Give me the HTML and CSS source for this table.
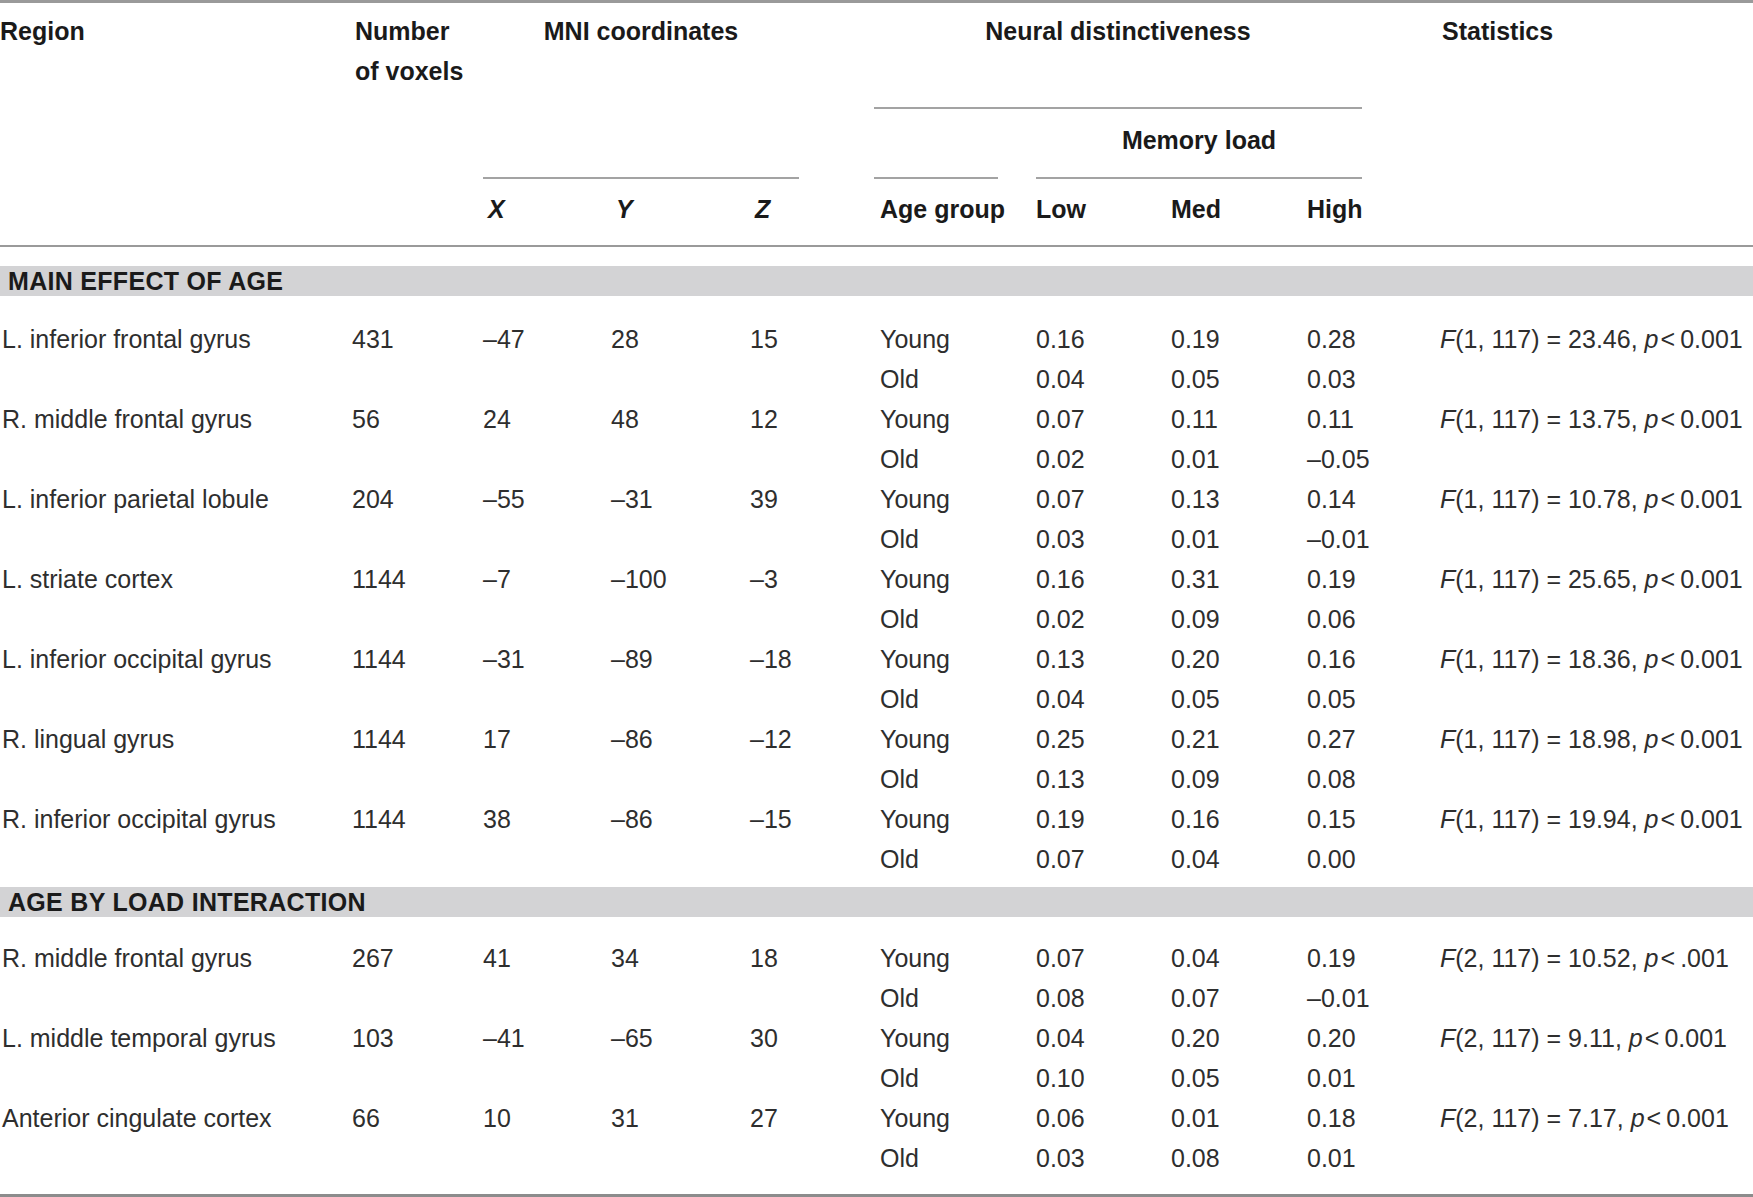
FILE: index.html
```html
<!DOCTYPE html>
<html lang="en">
<head>
<meta charset="utf-8">
<title>Neural distinctiveness table</title>
<link rel="stylesheet" href="styles.css">
</head>
<body>
<table class="tbl">
  <colgroup>
    <col class="c-region"><col class="c-num"><col class="c-x"><col class="c-y"><col class="c-z"><col class="c-gap1">
    <col class="c-age"><col class="c-gap2"><col class="c-low"><col class="c-med"><col class="c-high"><col class="c-gap3"><col class="c-stats">
  </colgroup>
  <thead>
    <tr class="h1">
      <th rowspan="3" class="th-top">Region</th>
      <th rowspan="3" class="th-top th-num">Number<br>of voxels</th>
      <th rowspan="2" colspan="3" class="th-top th-center rule">MNI coordinates</th>
      <th rowspan="3"></th>
      <th colspan="5" class="th-top th-center rule">Neural distinctiveness</th>
      <th rowspan="3"></th>
      <th rowspan="3" class="th-top th-stats">Statistics</th>
    </tr>
    <tr class="h2">
      <th class="rule"></th>
      <th></th>
      <th colspan="3" class="th-mid th-center rule">Memory load</th>
    </tr>
    <tr class="h3">
      <th class="th-sub th-axis">X</th>
      <th class="th-sub th-axis">Y</th>
      <th class="th-sub th-axis">Z</th>
      <th class="th-sub th-age">Age group</th>
      <th></th>
      <th class="th-sub">Low</th>
      <th class="th-sub">Med</th>
      <th class="th-sub">High</th>
    </tr>
  </thead>
  <tbody>
    <tr class="gap-rule"><td colspan="13"></td></tr>
    <tr class="band"><td colspan="13">MAIN EFFECT OF AGE</td></tr>
    <tr class="gap-a"><td colspan="13"></td></tr>

    <tr class="row"><td class="reg">L. inferior frontal gyrus</td><td>431</td><td>–47</td><td>28</td><td colspan="2">15</td><td colspan="2" class="age">Young</td><td>0.16</td><td>0.19</td><td colspan="2">0.28</td><td class="st"><i>F</i>(1, 117) = 23.46, <i>p</i>&#8202;&lt;&#8201;0.001</td></tr>
    <tr class="row"><td colspan="6"></td><td colspan="2" class="age">Old</td><td>0.04</td><td>0.05</td><td colspan="2">0.03</td><td></td></tr>

    <tr class="row"><td class="reg">R. middle frontal gyrus</td><td>56</td><td>24</td><td>48</td><td colspan="2">12</td><td colspan="2" class="age">Young</td><td>0.07</td><td>0.11</td><td colspan="2">0.11</td><td class="st"><i>F</i>(1, 117) = 13.75, <i>p</i>&#8202;&lt;&#8201;0.001</td></tr>
    <tr class="row"><td colspan="6"></td><td colspan="2" class="age">Old</td><td>0.02</td><td>0.01</td><td colspan="2">–0.05</td><td></td></tr>

    <tr class="row"><td class="reg">L. inferior parietal lobule</td><td>204</td><td>–55</td><td>–31</td><td colspan="2">39</td><td colspan="2" class="age">Young</td><td>0.07</td><td>0.13</td><td colspan="2">0.14</td><td class="st"><i>F</i>(1, 117) = 10.78, <i>p</i>&#8202;&lt;&#8201;0.001</td></tr>
    <tr class="row"><td colspan="6"></td><td colspan="2" class="age">Old</td><td>0.03</td><td>0.01</td><td colspan="2">–0.01</td><td></td></tr>

    <tr class="row"><td class="reg">L. striate cortex</td><td>1144</td><td>–7</td><td>–100</td><td colspan="2">–3</td><td colspan="2" class="age">Young</td><td>0.16</td><td>0.31</td><td colspan="2">0.19</td><td class="st"><i>F</i>(1, 117) = 25.65, <i>p</i>&#8202;&lt;&#8201;0.001</td></tr>
    <tr class="row"><td colspan="6"></td><td colspan="2" class="age">Old</td><td>0.02</td><td>0.09</td><td colspan="2">0.06</td><td></td></tr>

    <tr class="row"><td class="reg">L. inferior occipital gyrus</td><td>1144</td><td>–31</td><td>–89</td><td colspan="2">–18</td><td colspan="2" class="age">Young</td><td>0.13</td><td>0.20</td><td colspan="2">0.16</td><td class="st"><i>F</i>(1, 117) = 18.36, <i>p</i>&#8202;&lt;&#8201;0.001</td></tr>
    <tr class="row"><td colspan="6"></td><td colspan="2" class="age">Old</td><td>0.04</td><td>0.05</td><td colspan="2">0.05</td><td></td></tr>

    <tr class="row"><td class="reg">R. lingual gyrus</td><td>1144</td><td>17</td><td>–86</td><td colspan="2">–12</td><td colspan="2" class="age">Young</td><td>0.25</td><td>0.21</td><td colspan="2">0.27</td><td class="st"><i>F</i>(1, 117) = 18.98, <i>p</i>&#8202;&lt;&#8201;0.001</td></tr>
    <tr class="row"><td colspan="6"></td><td colspan="2" class="age">Old</td><td>0.13</td><td>0.09</td><td colspan="2">0.08</td><td></td></tr>

    <tr class="row"><td class="reg">R. inferior occipital gyrus</td><td>1144</td><td>38</td><td>–86</td><td colspan="2">–15</td><td colspan="2" class="age">Young</td><td>0.19</td><td>0.16</td><td colspan="2">0.15</td><td class="st"><i>F</i>(1, 117) = 19.94, <i>p</i>&#8202;&lt;&#8201;0.001</td></tr>
    <tr class="row"><td colspan="6"></td><td colspan="2" class="age">Old</td><td>0.07</td><td>0.04</td><td colspan="2">0.00</td><td></td></tr>

    <tr class="gap-b"><td colspan="13"></td></tr>
    <tr class="band"><td colspan="13">AGE BY LOAD INTERACTION</td></tr>
    <tr class="gap-c"><td colspan="13"></td></tr>

    <tr class="row"><td class="reg">R. middle frontal gyrus</td><td>267</td><td>41</td><td>34</td><td colspan="2">18</td><td colspan="2" class="age">Young</td><td>0.07</td><td>0.04</td><td colspan="2">0.19</td><td class="st"><i>F</i>(2, 117) = 10.52, <i>p</i>&#8202;&lt;&#8201;.001</td></tr>
    <tr class="row"><td colspan="6"></td><td colspan="2" class="age">Old</td><td>0.08</td><td>0.07</td><td colspan="2">–0.01</td><td></td></tr>

    <tr class="row"><td class="reg">L. middle temporal gyrus</td><td>103</td><td>–41</td><td>–65</td><td colspan="2">30</td><td colspan="2" class="age">Young</td><td>0.04</td><td>0.20</td><td colspan="2">0.20</td><td class="st"><i>F</i>(2, 117) = 9.11, <i>p</i>&#8202;&lt;&#8201;0.001</td></tr>
    <tr class="row"><td colspan="6"></td><td colspan="2" class="age">Old</td><td>0.10</td><td>0.05</td><td colspan="2">0.01</td><td></td></tr>

    <tr class="row"><td class="reg">Anterior cingulate cortex</td><td>66</td><td>10</td><td>31</td><td colspan="2">27</td><td colspan="2" class="age">Young</td><td>0.06</td><td>0.01</td><td colspan="2">0.18</td><td class="st"><i>F</i>(2, 117) = 7.17, <i>p</i>&#8202;&lt;&#8201;0.001</td></tr>
    <tr class="row"><td colspan="6"></td><td colspan="2" class="age">Old</td><td>0.03</td><td>0.08</td><td colspan="2">0.01</td><td></td></tr>

    <tr class="gap-d"><td colspan="13"></td></tr>
  </tbody>
</table>
</body>
</html>
```

FILE: styles.css
```css
html, body {
  margin: 0;
  padding: 0;
  background: #ffffff;
}

body {
  font-family: "Liberation Sans", Arial, sans-serif;
  color: #2e2e2e;
  width: 1753px;
  height: 1197px;
  overflow: hidden;
}

.tbl {
  table-layout: fixed;
  width: 1753px;
  border-collapse: separate;
  border-spacing: 0;
  border-top: 3px solid #9a9a9a;
  border-bottom: 3px solid #8c8c8c;
  font-size: 25px;
  line-height: 40px;
}

.c-region { width: 352px; }
.c-num { width: 131px; }
.c-x { width: 128px; }
.c-y { width: 139px; }
.c-z { width: 49px; }
.c-gap1 { width: 75px; }
.c-age { width: 124px; }
.c-gap2 { width: 38px; }
.c-low { width: 135px; }
.c-med { width: 136px; }
.c-high { width: 55px; }
.c-gap3 { width: 78px; }
.c-stats { width: 313px; }

th, td {
  padding: 0;
  text-align: left;
  white-space: nowrap;
  overflow: visible;
}

th {
  font-weight: bold;
  color: #1a1a1a;
  vertical-align: top;
}

.h1 { height: 106px; }
.h2 { height: 70px; }
.h3 { height: 66px; }

.th-top { padding-top: 8px; }
.th-mid { padding-top: 11px; }
.th-sub { padding-top: 10px; }
.th-center { text-align: center; }
.th-num { padding-left: 3px; }
.th-axis { font-style: italic; padding-left: 5px; }
.th-age { padding-left: 6px; }
.th-stats { padding-left: 2px; }

.rule { border-bottom: 2px solid #a3a3a3; }

.gap-rule { height: 21px; }
.gap-rule td { border-top: 2px solid #9a9a9a; }
.gap-a { height: 23px; }
.gap-b { height: 8px; }
.gap-c { height: 21px; }
.gap-d { height: 16px; }

.band { height: 30px; }
.band td {
  background: #d3d3d5;
  font-weight: bold;
  color: #1a1a1a;
  line-height: 30px;
  padding-left: 8px;
  letter-spacing: 0.3px;
}

.row { height: 40px; }
.row td { vertical-align: middle; }
.reg { padding-left: 2px; }
.age { padding-left: 6px; }
.st { letter-spacing: 0; }
```
